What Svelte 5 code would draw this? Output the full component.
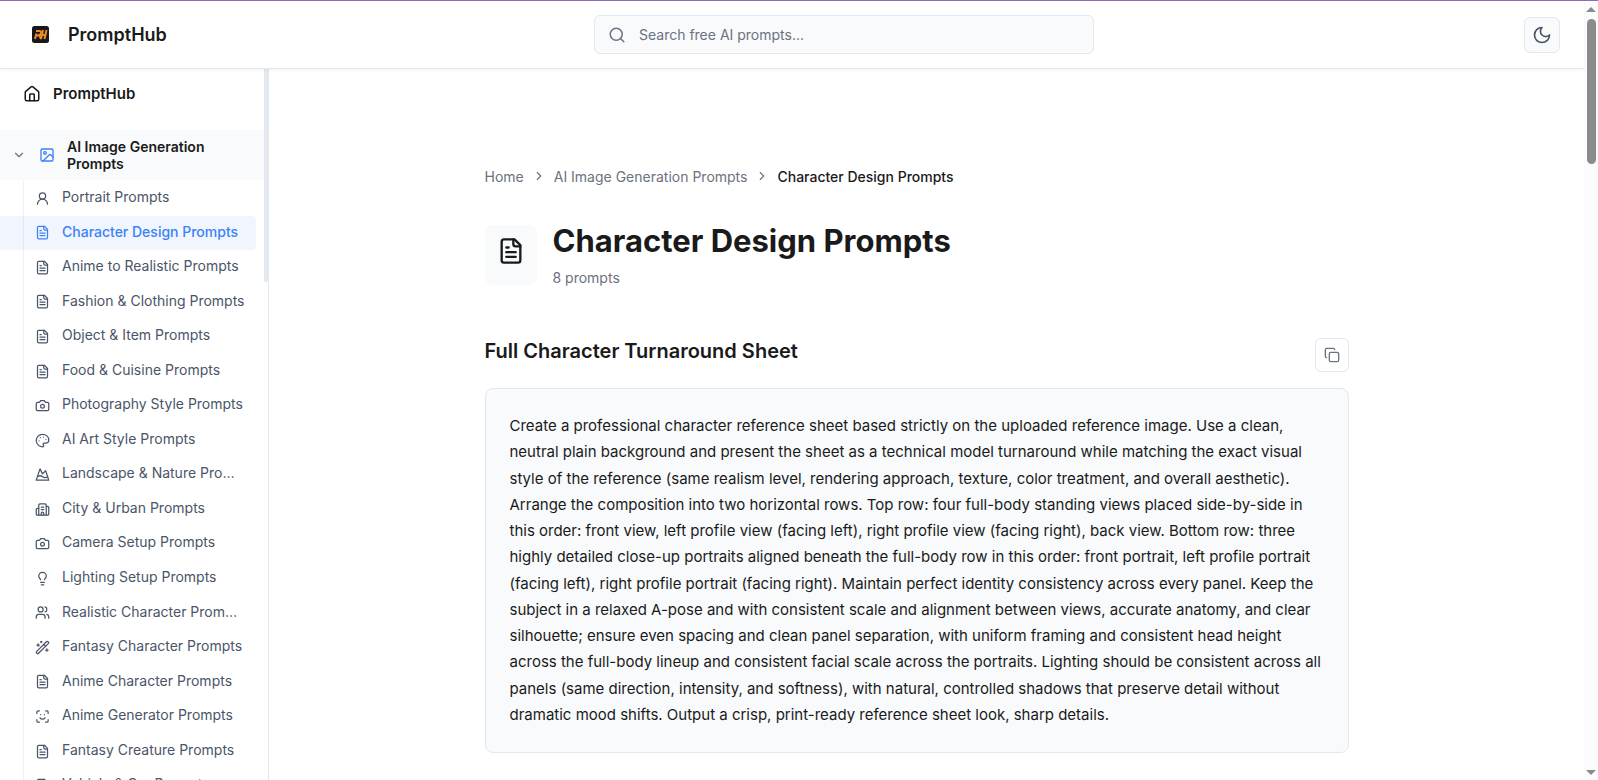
<script lang="ts">
	const icons: Record<string, string[]> = {
		home: [
			'M15 21v-8a1 1 0 0 0-1-1h-4a1 1 0 0 0-1 1v8',
			'M3 10a2 2 0 0 1 .709-1.528l7-6a2 2 0 0 1 2.582 0l7 6A2 2 0 0 1 21 10v9a2 2 0 0 1-2 2H5a2 2 0 0 1-2-2z'
		],
		search: ['M19 11a8 8 0 1 1-16 0 8 8 0 0 1 16 0', 'm21 21-4.34-4.34'],
		moon: ['M12 3a6 6 0 0 0 9 9 9 9 0 1 1-9-9Z'],
		down: ['m6 9 6 6 6-6'],
		right: ['m9 18 6-6-6-6'],
		image: [
			'M5 3h14a2 2 0 0 1 2 2v14a2 2 0 0 1-2 2H5a2 2 0 0 1-2-2V5a2 2 0 0 1 2-2',
			'M11 9a2 2 0 1 1-4 0 2 2 0 0 1 4 0',
			'm21 15-3.086-3.086a2 2 0 0 0-2.828 0L6 21'
		],
		user: ['M17 8a5 5 0 1 1-10 0 5 5 0 0 1 10 0', 'M20 21a8 8 0 0 0-16 0'],
		file: [
			'M15 2H6a2 2 0 0 0-2 2v16a2 2 0 0 0 2 2h12a2 2 0 0 0 2-2V7Z',
			'M14 2v4a2 2 0 0 0 2 2h4',
			'M10 9H8',
			'M16 13H8',
			'M16 17H8'
		],
		camera: [
			'M14.5 4h-5L7 7H4a2 2 0 0 0-2 2v9a2 2 0 0 0 2 2h16a2 2 0 0 0 2-2V9a2 2 0 0 0-2-2h-3l-2.5-3z',
			'M15 13a3 3 0 1 1-6 0 3 3 0 0 1 6 0'
		],
		palette: [
			'M12 22a1 1 0 0 1 0-20 10 9 0 0 1 10 9 5 5 0 0 1-5 5h-2.25a1.75 1.75 0 0 0-1.4 2.8l.3.4a1.75 1.75 0 0 1-1.4 2.8z',
			'M13.5 6.5h.01',
			'M17.5 10.5h.01',
			'M6.5 12.5h.01',
			'M8.5 7.5h.01'
		],
		mountain: [
			'm8 3 4 8 5-5 5 15H2L8 3z',
			'M4.14 15.08c2.62-1.57 5.24-1.43 7.86.42 2.74 1.94 5.49 2 8.23.19'
		],
		building: [
			'M10 12h4',
			'M10 8h4',
			'M14 21v-3a2 2 0 0 0-4 0v3',
			'M6 10H4a2 2 0 0 0-2 2v7a2 2 0 0 0 2 2h16a2 2 0 0 0 2-2V9a2 2 0 0 0-2-2h-2',
			'M6 21V5a2 2 0 0 1 2-2h8a2 2 0 0 1 2 2v16'
		],
		bulb: [
			'M15 14c.2-1 .7-1.7 1.5-2.5 1-.9 1.5-2.2 1.5-3.5A6 6 0 0 0 6 8c0 1 .2 2.2 1.5 3.5.7.7 1.3 1.5 1.5 2.5',
			'M9 18h6',
			'M10 22h4'
		],
		users: [
			'M16 21v-2a4 4 0 0 0-4-4H6a4 4 0 0 0-4 4v2',
			'M13 7a4 4 0 1 1-8 0 4 4 0 0 1 8 0',
			'M22 21v-2a4 4 0 0 0-3-3.87',
			'M16 3.13a4 4 0 0 1 0 7.75'
		],
		wand: [
			'm21.64 3.64-1.28-1.28a1.21 1.21 0 0 0-1.72 0L2.36 18.64a1.21 1.21 0 0 0 0 1.72l1.28 1.28a1.2 1.2 0 0 0 1.72 0L21.64 5.36a1.2 1.2 0 0 0 0-1.72',
			'm14 7 3 3',
			'M5 6v4',
			'M19 14v4',
			'M10 2v2',
			'M7 8H3',
			'M21 16h-4',
			'M11 3H9'
		],
		face: [
			'M3 7V5a2 2 0 0 1 2-2h2',
			'M17 3h2a2 2 0 0 1 2 2v2',
			'M21 17v2a2 2 0 0 1-2 2h-2',
			'M7 21H5a2 2 0 0 1-2-2v-2',
			'M8 14s1.5 2 4 2 4-2 4-2',
			'M9 9h.01',
			'M15 9h.01'
		],
		copy: [
			'M10 8h10a2 2 0 0 1 2 2v10a2 2 0 0 1-2 2H10a2 2 0 0 1-2-2V10a2 2 0 0 1 2-2',
			'M4 16c-1.1 0-2-.9-2-2V4c0-1.1.9-2 2-2h10c1.1 0 2 .9 2 2'
		]
	};

	const categories = [
		{ icon: 'user', name: 'Portrait Prompts' },
		{ icon: 'file', name: 'Character Design Prompts' },
		{ icon: 'file', name: 'Anime to Realistic Prompts' },
		{ icon: 'file', name: 'Fashion & Clothing Prompts' },
		{ icon: 'file', name: 'Object & Item Prompts' },
		{ icon: 'file', name: 'Food & Cuisine Prompts' },
		{ icon: 'camera', name: 'Photography Style Prompts' },
		{ icon: 'palette', name: 'AI Art Style Prompts' },
		{ icon: 'mountain', name: 'Landscape & Nature Prompts' },
		{ icon: 'building', name: 'City & Urban Prompts' },
		{ icon: 'camera', name: 'Camera Setup Prompts' },
		{ icon: 'bulb', name: 'Lighting Setup Prompts' },
		{ icon: 'users', name: 'Realistic Character Prompts' },
		{ icon: 'wand', name: 'Fantasy Character Prompts' },
		{ icon: 'file', name: 'Anime Character Prompts' },
		{ icon: 'face', name: 'Anime Generator Prompts' },
		{ icon: 'file', name: 'Fantasy Creature Prompts' },
		{ icon: 'file', name: 'Vehicle & Car Prompts' }
	];

	let active = $state('Character Design Prompts');
	let open = $state(true);
	let query = $state('');

	const prompt =
		'Create a professional character reference sheet based strictly on the uploaded reference image. Use a clean, neutral plain background and present the sheet as a technical model turnaround while matching the exact visual style of the reference (same realism level, rendering approach, texture, color treatment, and overall aesthetic). Arrange the composition into two horizontal rows. Top row: four full-body standing views placed side-by-side in this order: front view, left profile view (facing left), right profile view (facing right), back view. Bottom row: three highly detailed close-up portraits aligned beneath the full-body row in this order: front portrait, left profile portrait (facing left), right profile portrait (facing right). Maintain perfect identity consistency across every panel. Keep the subject in a relaxed A-pose and with consistent scale and alignment between views, accurate anatomy, and clear silhouette; ensure even spacing and clean panel separation, with uniform framing and consistent head height across the full-body lineup and consistent facial scale across the portraits. Lighting should be consistent across all panels (same direction, intensity, and softness), with natural, controlled shadows that preserve detail without dramatic mood shifts. Output a crisp, print-ready reference sheet look, sharp details.';

	function copyPrompt() {
		navigator.clipboard?.writeText(prompt);
	}
</script>

{#snippet icon(name: string, size: number)}
	<svg class="icon" width={size} height={size} viewBox="0 0 24 24" aria-hidden="true">
		{#each icons[name] as d}
			<path {d} />
		{/each}
	</svg>
{/snippet}

<div class="shell">
	<div class="page">
		<header class="topbar">
			<a class="brand" href="/">
				<span class="brand-mark">
					<svg width="17" height="17" viewBox="0 0 34 34" aria-hidden="true">
						<rect width="34" height="34" rx="5" fill="#18181a" />
						<g fill="none" stroke="#ee8a22" stroke-width="4">
							<path d="M6 26 9 15M8 10h7q4 0 3 4-1 5-6 5H9M15 19l3 7" />
							<path d="M22 8l-4 18M29 8l-4 18M20 18h7" />
						</g>
					</svg>
				</span>
				PromptHub
			</a>
			<label class="search">
				{@render icon('search', 18)}
				<input type="text" placeholder="Search free AI prompts..." aria-label="Search" bind:value={query} />
			</label>
			<button class="theme" aria-label="Toggle theme">{@render icon('moon', 20)}</button>
		</header>

		<div class="body">
			<aside class="sidebar">
				<nav class="nav">
					<a class="home" href="/">
						{@render icon('home', 18)}
						PromptHub
					</a>
					<button class="group" aria-expanded={open} onclick={() => (open = !open)}>
						{@render icon('down', 14)}
						<span class="group-icon">{@render icon('image', 16)}</span>
						<span class="group-name">AI Image Generation Prompts</span>
					</button>
					{#if open}
						<ul class="items">
							{#each categories as item}
								<li>
									<a
										class="item"
										class:active={item.name === active}
										href="#prompts"
										onclick={() => (active = item.name)}
									>
										{@render icon(item.icon, 15)}
										<span class="item-name">{item.name}</span>
									</a>
								</li>
							{/each}
						</ul>
					{/if}
				</nav>
				<div class="side-thumb"></div>
			</aside>

			<main class="main">
				<div class="content">
					<nav class="crumbs" aria-label="Breadcrumb">
						<a href="/">Home</a>
						{@render icon('right', 14)}
						<a href="#images">AI Image Generation Prompts</a>
						{@render icon('right', 14)}
						<span class="current">Character Design Prompts</span>
					</nav>

					<div class="heading">
						<div class="heading-icon">{@render icon('file', 28)}</div>
						<div>
							<h1>Character Design Prompts</h1>
							<p class="count">8 prompts</p>
						</div>
					</div>

					<section>
						<div class="prompt-head">
							<h2>Full Character Turnaround Sheet</h2>
							<button class="copy" aria-label="Copy prompt" onclick={copyPrompt}>
								{@render icon('copy', 16)}
							</button>
						</div>
						<p class="prompt">{prompt}</p>
					</section>
				</div>
			</main>
		</div>
	</div>

	<div class="scrollbar">
		<span class="arrow up"></span>
		<span class="thumb"></span>
		<span class="arrow down"></span>
	</div>
</div>

<style>
	:global(body) {
		background: #fff;
		color: #1a1a1a;
		font-family: Inter, 'Liberation Sans', sans-serif;
		font-size: 14px;
	}

	.shell,
	.shell * {
		box-sizing: border-box;
	}

	.shell {
		display: flex;
		height: 100vh;
		overflow: hidden;
		border-top: 1px solid #8f6bb3;
	}

	.page {
		flex: 1;
		min-width: 0;
		display: flex;
		flex-direction: column;
	}

	a {
		color: inherit;
		text-decoration: none;
	}

	button {
		font: inherit;
		color: inherit;
		cursor: pointer;
	}

	.icon {
		display: block;
		flex-shrink: 0;
		fill: none;
		stroke: currentColor;
		stroke-width: 2;
		stroke-linecap: round;
		stroke-linejoin: round;
	}

	.topbar {
		position: relative;
		flex-shrink: 0;
		display: flex;
		align-items: center;
		justify-content: space-between;
		height: 68px;
		padding: 0 24px;
		border-bottom: 1px solid #e2e8f0;
		box-shadow: 0 1px 3px rgba(0, 0, 0, 0.05);
	}

	.brand {
		display: flex;
		align-items: center;
		gap: 12px;
		width: 140px;
		font-size: 18px;
		font-weight: 600;
		white-space: nowrap;
	}

	.brand-mark {
		display: flex;
		flex-shrink: 0;
		justify-content: center;
		width: 32px;
	}

	.search {
		display: flex;
		align-items: center;
		gap: 13px;
		width: 500px;
		height: 39px;
		padding: 0 13px;
		background: #f8fafc;
		border: 1px solid #e2e8f0;
		border-radius: 6px;
		color: #6b7280;
	}

	.search input {
		flex: 1;
		min-width: 0;
		padding: 0;
		border: 0;
		outline: 0;
		background: none;
		font: inherit;
		color: #1a1a1a;
	}

	.search input::placeholder {
		color: #6b7280;
	}

	.theme {
		display: flex;
		align-items: center;
		justify-content: center;
		width: 36px;
		height: 36px;
		padding: 0;
		background: #f8fafc;
		border: 1px solid #e2e8f0;
		border-radius: 6px;
		color: #4a5568;
	}

	.body {
		flex: 1;
		min-height: 0;
		display: flex;
	}

	.sidebar {
		display: flex;
		flex: 0 0 269px;
		overflow: hidden;
		border-right: 1px solid #e2e8f0;
	}

	.nav {
		flex: 1;
		min-width: 0;
	}

	.side-thumb {
		width: 4px;
		height: 213px;
		background: #e2e8f0;
		border-radius: 0 0 2px 2px;
	}

	.home {
		display: flex;
		align-items: center;
		gap: 12px;
		height: 49px;
		margin-bottom: 12px;
		padding: 0 23px;
		font-size: 15px;
		font-weight: 600;
	}

	.group {
		display: flex;
		align-items: center;
		width: 100%;
		height: 50px;
		padding: 0 12px;
		background: #f8fafc;
		border: 0;
		text-align: left;
		color: #6b7280;
	}

	.group-icon {
		margin: 0 12px 0 13px;
		color: #3b82f6;
	}

	.group-name {
		font-weight: 600;
		line-height: 17px;
		color: #1a1a1a;
	}

	.items {
		margin: 1px 8px 0 23px;
		padding: 0;
		border-left: 1px solid #edf0f4;
		list-style: none;
	}

	.item {
		display: flex;
		align-items: center;
		gap: 12px;
		margin-left: -24px;
		padding: 7px 11px 7px 35px;
		border-radius: 0 4px 4px 0;
		line-height: 1.325;
		color: #4a5568;
	}

	.item-name {
		padding-bottom: 2px;
		overflow: hidden;
		text-overflow: ellipsis;
		white-space: nowrap;
	}

	.item.active {
		background: rgba(59, 130, 246, 0.08);
		color: #3b82f6;
		font-weight: 500;
	}

	.main {
		flex: 1;
		min-width: 0;
		padding: 95px 20px 0 0;
		overflow: hidden;
	}

	.content {
		max-width: 864px;
		margin: 0 auto;
	}

	.crumbs {
		display: flex;
		align-items: center;
		gap: 8px;
		height: 24px;
		margin-bottom: 37px;
		color: #6b7280;
	}

	.crumbs .current {
		color: #1a1a1a;
		font-weight: 500;
	}

	.heading {
		display: flex;
		gap: 16px;
		margin-bottom: 50px;
	}

	.heading-icon {
		height: 60px;
		padding: 12px;
		background: #f8fafc;
		border-radius: 8px;
	}

	h1 {
		margin: 0 0 11px;
		font-size: 31px;
		font-weight: 700;
		line-height: 32px;
	}

	.count {
		margin: 0;
		line-height: 20px;
		color: #6b7280;
	}

	.prompt-head {
		display: flex;
		justify-content: space-between;
		margin-bottom: 16px;
	}

	h2 {
		margin: 0;
		font-size: 20px;
		font-weight: 600;
		line-height: 26px;
	}

	.copy {
		display: flex;
		align-items: center;
		justify-content: center;
		width: 34px;
		height: 34px;
		padding: 0;
		background: #fff;
		border: 1px solid #e2e8f0;
		border-radius: 6px;
		color: #6b7280;
	}

	.prompt {
		margin: 0;
		padding: 24px;
		background: #f8fafc;
		border: 1px solid #e2e8f0;
		border-radius: 8px;
		font-size: 15px;
		line-height: 1.75;
	}

	.scrollbar {
		display: flex;
		flex-direction: column;
		align-items: center;
		width: 14px;
		padding: 6px 0 5px;
		background: #fcfcfc;
	}

	.thumb {
		width: 9px;
		height: 145px;
		margin: 7px 0 auto;
		background: #8b8b8b;
		border-radius: 5px;
	}

	.arrow {
		border: 0 solid transparent;
		border-left-width: 5px;
		border-right-width: 5px;
	}

	.up {
		border-bottom: 5px solid #8b8b8b;
	}

	.down {
		border-top: 5px solid #8b8b8b;
	}
</style>
